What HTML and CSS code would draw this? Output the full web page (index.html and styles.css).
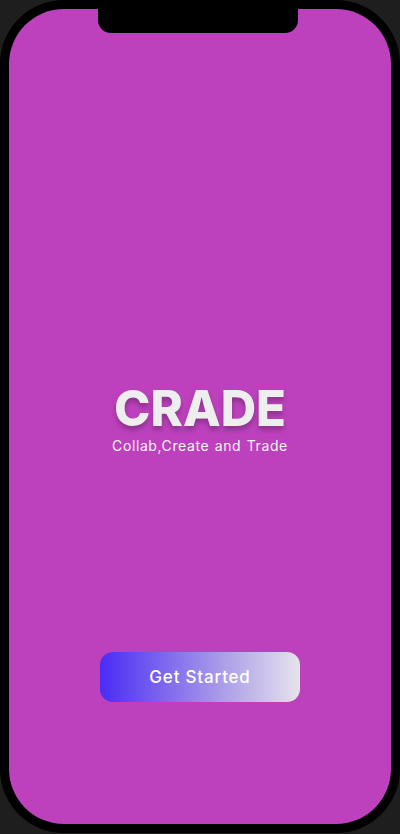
FILE: index.html
```html
<!DOCTYPE html>
<html>
<head>
<meta charset="utf-8">
<link rel="stylesheet" href="styles.css">
</head>
<body>
<div class="phone">
  <div class="screen">
    <div class="notch"></div>
    <div class="brand">
      <h1 class="title">CRADE</h1>
      <p class="tagline">Collab,Create and Trade</p>
    </div>
    <button class="cta">Get Started</button>
  </div>
</div>
</body>
</html>
```

FILE: styles.css
```css
html, body {
  margin: 0;
  padding: 0;
  background: #1e1e1e;
}
.phone {
  width: 400px;
  height: 833px;
  box-sizing: border-box;
  padding: 9px;
  background: #000;
  border-radius: 64px;
}
.screen {
  position: relative;
  height: 815px;
  background: #bd41bc;
  border-radius: 55px;
  display: flex;
  flex-direction: column;
  align-items: center;
  font-family: Inter, "Noto Sans", sans-serif;
}
.notch {
  position: absolute;
  top: 0;
  left: 89px;
  width: 200px;
  height: 24px;
  background: #000;
  border-radius: 0 0 13px 13px;
}
.brand {
  margin-top: 375px;
  display: flex;
  flex-direction: column;
  align-items: center;
}
.title {
  margin: 0;
  font-size: 49px;
  line-height: 50px;
  font-weight: 800;
  color: #eeeeee;
  letter-spacing: 0;
  text-shadow: 0 4px 5px rgba(0,0,0,0.25);
}
.tagline {
  margin: 3px 0 0;
  font-size: 14px;
  line-height: 18px;
  letter-spacing: 0.6px;
  word-spacing: 1px;
  color: #f4f4f4;
}
.cta {
  margin-top: 197px;
  width: 200px;
  height: 50px;
  border: none;
  border-radius: 13px;
  background: linear-gradient(90deg, #4a2cf5 0%, #a99be8 60%, #e6e3ec 100%);
  color: #fff;
  font-family: Inter, "Noto Sans", sans-serif;
  font-size: 17px;
  letter-spacing: 0.8px;
  font-weight: 500;
}
```
